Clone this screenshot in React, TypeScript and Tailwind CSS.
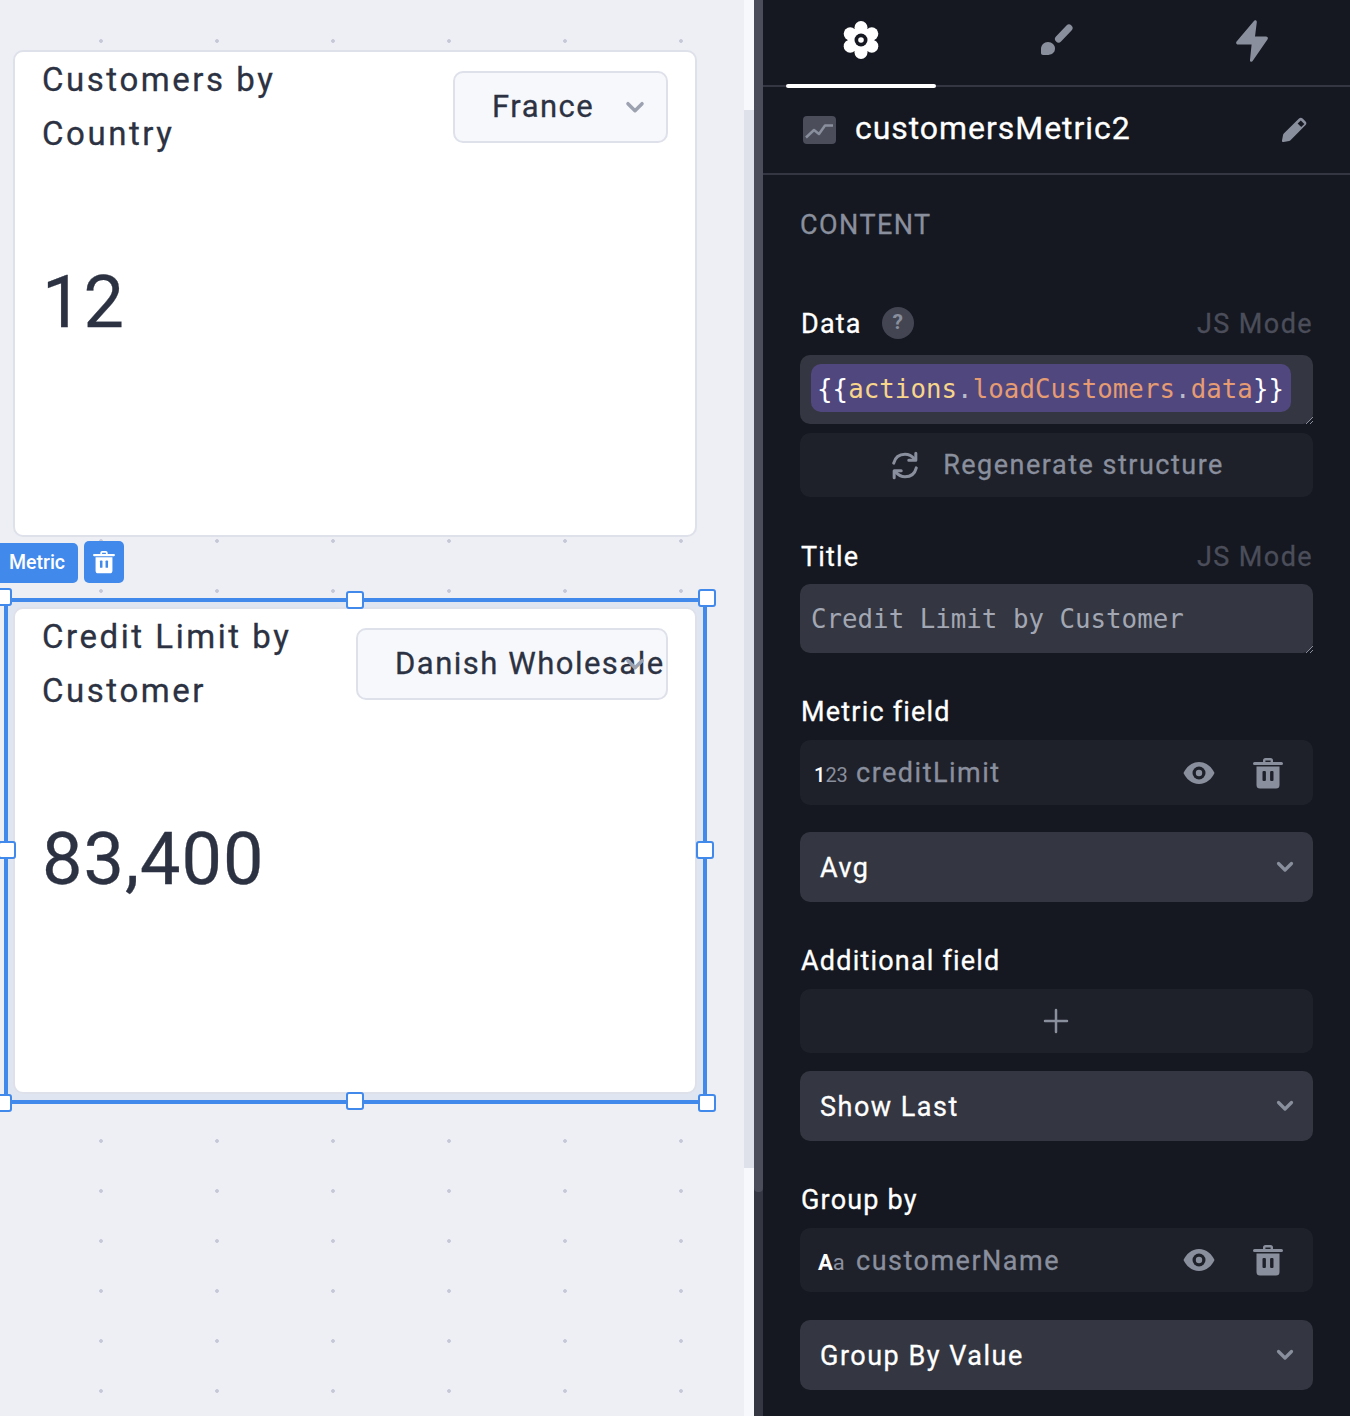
import React from 'react';

const roboto = "font-['Roboto',sans-serif]";
const mono = "font-['DejaVu_Sans_Mono',monospace]";
// the installed Roboto has no weight between 400 and 500, the picture sits in between
const semi = '[-webkit-text-stroke:0.3px_currentColor]';

const Chevron: React.FC<{ className?: string }> = ({ className }) => (
  <svg viewBox="0 0 18 12" className={className} fill="none" stroke="currentColor" strokeWidth="3.200" strokeLinecap="round" strokeLinejoin="round">
    <path d="M2.500 2.500 9 9l6.500-6.500" />
  </svg>
);

const TrashIcon: React.FC<{ className?: string; slot: string }> = ({ className, slot }) => (
  <svg viewBox="0 0 30 32" className={className}>
    <path fill="currentColor" d="M10 5V3.500A2.500 2.500 0 0 1 12.500 1h5A2.500 2.500 0 0 1 20 3.500V5h8.500a1.500 1.500 0 0 1 0 3H1.500a1.500 1.500 0 0 1 0-3H10Zm2.400 0h5.200V3.400h-5.200V5ZM3.500 9.500h23V28a3.500 3.500 0 0 1-3.500 3.500H7A3.500 3.500 0 0 1 3.500 28V9.500Z" />
    <rect x="9.500" y="14" width="3.400" height="10" rx="1" fill={slot} />
    <rect x="17.100" y="14" width="3.400" height="10" rx="1" fill={slot} />
  </svg>
);

const EyeIcon: React.FC<{ className?: string }> = ({ className }) => (
  <svg viewBox="0 0 32 24" className={className}>
    <path fill="#8a8f9e" d="M16 1C8.500 1 3 6.500.500 12 3 17.500 8.500 23 16 23s13-5.500 15.500-11C29 6.500 23.500 1 16 1Z" />
    <circle cx="16" cy="12" r="6.500" fill="#1e2129" />
    <circle cx="16" cy="12" r="3.200" fill="#8a8f9e" />
  </svg>
);

const Resizer = () => (
  <svg viewBox="0 0 8 8" className="absolute right-0 bottom-0 w-2 h-2" stroke="#8a8f9e" strokeWidth="1">
    <path d="M8 1 1 8M8 5 5 8" />
  </svg>
);

const Label: React.FC<{ text: string; js?: boolean; help?: boolean; className: string }> = ({ text, js, help, className }) => (
  <div className={`flex items-center h-9 pt-[2px] ${className}`}>
    <span className={`ml-[1px] text-[27px] tracking-[1.2px] text-white ${semi}`}>{text}</span>
    {help && (
      <span className="ml-5 -mt-[2px] w-8 h-8 rounded-full bg-[#434652] text-[#8a8f9e] text-[21px] font-bold flex items-center justify-center">?</span>
    )}
    {js && <span className={`ml-auto text-[27px] tracking-[1.4px] text-[#4b4e5a] ${semi}`}>JS Mode</span>}
  </div>
);

const DarkSelect: React.FC<{ text: string; className: string }> = ({ text, className }) => (
  <div className={`flex items-center justify-between h-[70px] rounded-[10px] bg-[#343741] pl-5 pr-[19px] ${className}`}>
    <span className={`pt-[2px] text-[27px] tracking-[1.5px] text-white ${semi}`}>{text}</span>
    <Chevron className="w-[18px] h-3 text-[#8a8f9e]" />
  </div>
);

const FieldRow: React.FC<{ glyph: React.ReactNode; name: string; className: string; height: string }> = ({ glyph, name, className, height }) => (
  <div className={`flex items-center rounded-[10px] bg-[#1e2129] pr-[30px] ${height} ${className}`}>
    <span className="w-[56px] pl-[14px] pt-[4px] shrink-0">{glyph}</span>
    <span className={`pt-[2px] text-[27px] tracking-[1.5px] text-[#8a8f9e] ${semi}`}>{name}</span>
    <EyeIcon className="ml-auto w-8 h-6" />
    <TrashIcon className="ml-[38px] w-[30px] h-8 text-[#8a8f9e]" slot="#1e2129" />
  </div>
);

const MetricCard: React.FC<{ title: string; value: string; option: string; selectWidth: string }> = ({ title, value, option, selectWidth }) => (
  <div className="w-[684px] h-[487px] rounded-[10px] border-2 border-[#dfe1ea] bg-white text-[#2c3242]">
    <div className="flex items-start justify-between pt-[1px] pl-[27px] pr-[27px]">
      <div className={`max-w-[290px] text-[33px] leading-[54px] tracking-[2.55px] ${semi}`}>{title}</div>
      <div className={`relative mt-[18px] flex items-center h-[72px] shrink-0 rounded-[10px] border-2 border-[#dfe1ea] bg-[#f7f8fc] pl-[37px] ${selectWidth}`}>
        <span className={`text-[31px] tracking-[1.5px] whitespace-nowrap ${semi}`}>{option}</span>
        <Chevron className="absolute right-[21px] top-[28px] w-5 h-[13px] text-[#9da2b1]" />
      </div>
    </div>
    <div className={`pl-[27px] mt-[102px] text-[72px] leading-[80px] tracking-[1px] ${semi}`}>{value}</div>
  </div>
);

const Handle: React.FC<{ className: string }> = ({ className }) => (
  <div className={`absolute bg-white border-2 border-[#4189eb] rounded-[3px] ${className}`} />
);

const App: React.FC = () => (
  <div className={`flex w-[1350px] h-[1416px] overflow-hidden ${roboto}`}>
    {/* Canvas */}
    <div className="relative w-[744px] shrink-0 overflow-hidden bg-[#edeff5] bg-[radial-gradient(circle,#c5c8d6_1.5px,transparent_2.2px)] bg-[size:116px_50px] bg-[position:43px_16px]">
      <div className="absolute left-[13px] top-[50px]">
        <MetricCard title="Customers by Country" value="12" option="France" selectWidth="w-[215px]" />
      </div>

      <div className="absolute left-0 top-[543px] h-10 w-[78px] rounded-r-[5px] bg-[#4189eb] flex items-center pl-[9px] text-[19.5px] font-medium text-white">Metric</div>
      <div className="absolute left-[84px] top-[541px] h-[42px] w-10 rounded-[5px] bg-[#4189eb] flex items-center justify-center">
        <TrashIcon className="w-[22px] h-6 text-white" slot="#4189eb" />
      </div>

      <div className="absolute left-[4px] top-[598px] w-[703px] h-[506px] border-4 border-[#4189eb] bg-[#dfe6f2] p-[5px]">
        <MetricCard title="Credit Limit by Customer" value="83,400" option="Danish Wholesale" selectWidth="w-[312px]" />
      </div>
      <Handle className="left-[-6px] top-[588px] w-[18px] h-[18px]" />
      <Handle className="left-[346px] top-[591px] w-[18px] h-[18px]" />
      <Handle className="left-[698px] top-[589px] w-[18px] h-[18px]" />
      <Handle className="left-[-2px] top-[841px] w-[18px] h-[18px]" />
      <Handle className="left-[696px] top-[841px] w-[18px] h-[18px]" />
      <Handle className="left-[-6px] top-[1094px] w-[18px] h-[18px]" />
      <Handle className="left-[346px] top-[1092px] w-[18px] h-[18px]" />
      <Handle className="left-[698px] top-[1094px] w-[18px] h-[18px]" />
    </div>

    {/* Canvas scrollbar */}
    <div className="w-[10px] shrink-0 bg-[#f7f8fc] pt-[110px]">
      <div className="h-[1058px] bg-[#dfe1ea]" />
    </div>

    {/* Panel scrollbar */}
    <div className="w-[9px] shrink-0 bg-[#343741]">
      <div className="h-[1192px] rounded-b-[4px] bg-[#4b4e5a]" />
    </div>

    {/* Settings panel */}
    <div className="w-[587px] shrink-0 bg-[#151820]">
      <div className="grid grid-cols-3 h-[87px] border-b-2 border-[#343741]">
        <div className="relative flex justify-center pt-[20px]">
          <svg viewBox="0 0 40 40" className="w-10 h-10">
            <g fill="#fff">
              <circle cx="20" cy="7.500" r="6.500" />
              <circle cx="30.800" cy="13.800" r="6.500" />
              <circle cx="30.800" cy="26.200" r="6.500" />
              <circle cx="20" cy="32.500" r="6.500" />
              <circle cx="9.200" cy="26.200" r="6.500" />
              <circle cx="9.200" cy="13.800" r="6.500" />
              <circle cx="20" cy="20" r="13" />
            </g>
            <circle cx="20" cy="20" r="6.500" fill="#151820" />
            <circle cx="20" cy="20" r="2.800" fill="#fff" />
          </svg>
          <div className="absolute left-[23px] bottom-[-3px] w-[150px] h-1 rounded-full bg-white" />
        </div>
        <div className="flex justify-center pt-[24px]">
          <svg viewBox="0 0 32 32" className="w-8 h-8 ml-[1px]" fill="#8a8f9e">
            <path d="M28 4 17.500 15" stroke="#8a8f9e" strokeWidth="7" strokeLinecap="round" fill="none" />
            <path d="M7 18c4 0 7 3 7 6.500 0 4.500-4 6.500-8 6.500H2c-1.200 0-2-.8-2-2V25c0-4 3-7 7-7Z" />
          </svg>
        </div>
        <div className="flex justify-center pt-[20px]">
          <svg viewBox="0 0 32 42" className="w-8 h-[42px]" fill="#8a8f9e">
            <path d="M18.500.500c1.400-.6 2.500.4 2.300 1.800L19 16.500h11c1.600 0 2.300 1.300 1.600 2.700L16.800 40.800c-.9 1.500-3 1-2.800-.9l1.600-15.400H2C.5 24.500-.3 23 .4 21.800L17.500 1.500c.3-.4.600-.8 1-1Z" />
          </svg>
        </div>
      </div>

      <div className="flex items-center h-[88px] border-b-2 border-[#343741] pl-10 pr-[43px]">
        <svg viewBox="0 0 33 28" className="w-[33px] h-7">
          <rect width="33" height="28" rx="4" fill="#4b4e5a" />
          <path d="M3 21.500 11 14l5 4 6-8.500h8" fill="none" stroke="#8a8f9e" strokeWidth="2.500" strokeLinejoin="round" />
        </svg>
        <span className={`ml-[19px] mb-[4px] text-[32px] tracking-[0.95px] text-white ${semi}`}>customersMetric2</span>
        <svg viewBox="0 0 26 26" className="ml-auto w-[26px] h-[26px]" fill="#8a8f9e">
          <path d="M18 1.500c1-1 2.600-1 3.600 0l3 3c1 1 1 2.600 0 3.600L9.500 23.300c-.4.400-.9.600-1.400.700L2.600 25c-1 .2-1.800-.6-1.600-1.600L2.100 17.800c.1-.5.300-1 .7-1.400L18 1.500Z" />
          <rect x="17.500" y="4.500" width="5" height="4.500" transform="rotate(45 20 6.750)" fill="#151820" />
        </svg>
      </div>

      <div className="px-[37px]">
        <div className={`mt-[31px] h-9 pt-[2px] flex items-center text-[27px] tracking-[1.45px] text-[#8a8f9e] ${semi}`}>CONTENT</div>

        <Label text="Data" help js className="mt-[63px]" />
        <div className="relative mt-[14px] h-[69px] rounded-[10px] bg-[#343741] pl-[11px] pt-[9px]">
          <div className={`inline-flex items-center h-12 w-[480px] rounded-[10px] bg-[#51477f] pl-[6px] pt-[3px] text-[25.7px] tracking-[0.1px] ${mono}`}>
            <span className="text-white">{'{{'}</span>
            <span className="text-[#f7d58a]">actions</span>
            <span className="text-[#b9bcc8]">.</span>
            <span className="text-[#e59c72]">loadCustomers</span>
            <span className="text-[#b9bcc8]">.</span>
            <span className="text-[#e59c72]">data</span>
            <span className="text-white">{'}}'}</span>
          </div>
          <Resizer />
        </div>
        <div className="mt-[9px] h-16 rounded-[10px] bg-[#1e2129] flex items-center justify-center">
          <svg viewBox="0 0 34 30" className="w-[32px] h-[29px] mr-[22px]" fill="none" stroke="#8a8f9e" strokeWidth="3.200" strokeLinecap="round">
            <path d="M5 12.500C6.500 6.500 11 3 17 3c4.500 0 7.500 2 10 5" />
            <path d="M29 17.500C27.500 23.500 23 27 17 27c-4.500 0-7.500-2-10-5" />
            <path d="M28.500 2v7.500H21" strokeLinejoin="round" />
            <path d="M5.500 28v-7.500H13" strokeLinejoin="round" />
          </svg>
          <span className={`text-[27px] tracking-[1.5px] text-[#8a8f9e] ${semi}`}>Regenerate structure</span>
        </div>

        <Label text="Title" js className="mt-[41px]" />
        <div className="relative mt-[10px] h-[69px] rounded-[10px] bg-[#343741] flex items-center pl-[11px] pt-[2px]">
          <span className={`text-[25.8px] text-[#a3a7b4] ${mono}`}>Credit Limit by Customer</span>
          <Resizer />
        </div>

        <Label text="Metric field" className="mt-[40px]" />
        <FieldRow
          className="mt-[11px]"
          height="h-[65px]"
          name="creditLimit"
          glyph={
            <span className="text-[20px]">
              <span className="text-white font-medium">1</span>
              <span className="text-[#8a8f9e]">23</span>
            </span>
          }
        />
        <DarkSelect text="Avg" className="mt-[27px]" />

        <Label text="Additional field" className="mt-[40px]" />
        <div className="mt-[11px] h-16 rounded-[10px] bg-[#1e2129] flex items-center justify-center">
          <svg viewBox="0 0 26 26" className="w-[26px] h-[26px] -ml-[1px]" stroke="#8a8f9e" strokeWidth="2.500" strokeLinecap="round">
            <path d="M13 2v22M2 13h22" />
          </svg>
        </div>
        <DarkSelect text="Show Last" className="mt-[18px]" />

        <Label text="Group by" className="mt-[40px]" />
        <FieldRow
          className="mt-[11px]"
          height="h-16"
          name="customerName"
          glyph={
            <span className="pl-1 text-[22px]">
              <span className="text-white font-bold">A</span>
              <span className="text-[#8a8f9e]">a</span>
            </span>
          }
        />
        <DarkSelect text="Group By Value" className="mt-[28px]" />
      </div>
    </div>
  </div>
);

export default App;
